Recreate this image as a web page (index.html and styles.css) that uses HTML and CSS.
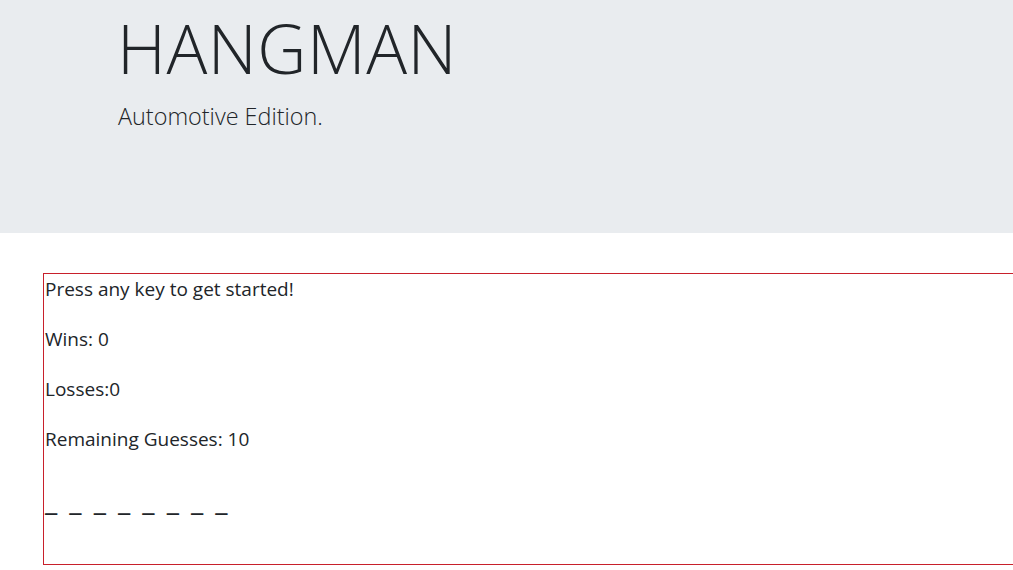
FILE: index.html
```html
<!DOCTYPE html>
<html>
<head>
<meta charset="utf-8">
<link rel="stylesheet" href="styles.css">
</head>
<body>
<header class="jumbotron">
  <div class="container">
    <h1 class="title">HANGMAN</h1>
    <p class="lead">Automotive Edition.</p>
  </div>
</header>
<main class="game">
  <p class="line">Press any key to get started!</p>
  <p class="line">Wins: 0</p>
  <p class="line">Losses:0</p>
  <p class="line">Remaining Guesses: 10</p>
  <p class="word">_ _ _ _ _ _ _ _</p>
</main>
</body>
</html>
```
FILE: styles.css
```css
html, body {
  margin: 0;
  padding: 0;
  overflow: hidden;
}
body {
  font-family: "Open Sans", "Noto Sans", sans-serif;
  color: #212529;
  background: #fff;
}
.jumbotron {
  background: #e9ecef;
  height: 233px;
  box-sizing: border-box;
  margin-bottom: 40px;
  padding-top: 5px;
}
.container {
  padding-left: 117px;
}
.title {
  margin: 0;
  font-size: 68px;
  font-weight: 300;
  line-height: 86px;
  letter-spacing: 0.5px;
}
.lead {
  margin: 10px 0 0 1px;
  font-size: 23.4px;
  font-weight: 300;
  line-height: 30px;
}
.game {
  margin-left: 43px;
  width: 1100px;
  height: 292px;
  box-sizing: border-box;
  border: 1px solid #c8202b;
  padding: 0 0 0 1px;
}
.line {
  margin: 0 0 20px;
  font-size: 19px;
  line-height: 30px;
}
.word {
  margin: 31px 0 0;
  font-size: 28px;
  line-height: 30px;
  letter-spacing: 2.4px;
}
```
